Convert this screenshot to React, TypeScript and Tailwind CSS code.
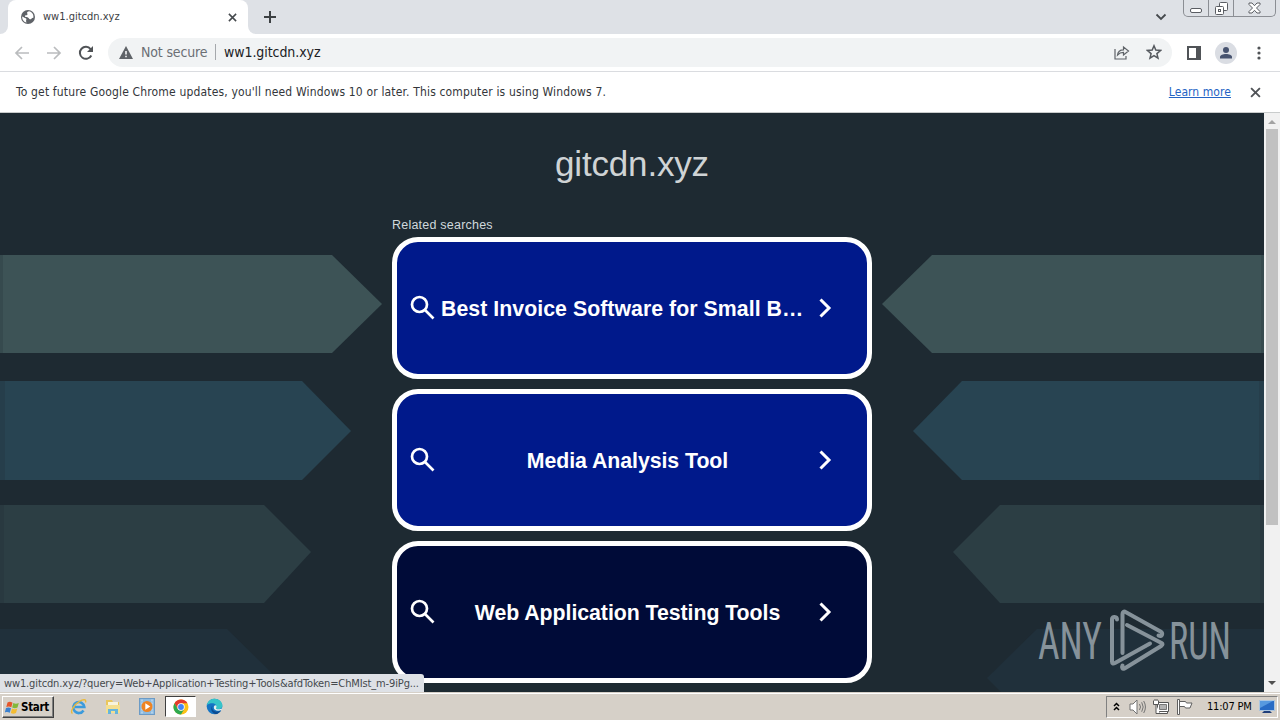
import type { ReactNode } from 'react';

// UI font of the desktop and the browser chrome
const uiFont = "font-['DejaVu_Sans_Condensed','DejaVu_Sans',sans-serif] [font-stretch:condensed]";

type Search = { label: string; active?: boolean; clipped?: boolean };

const searches: Search[] = [
    { label: 'Best Invoice Software for Small B…', clipped: true },
    { label: 'Media Analysis Tool' },
    { label: 'Web Application Testing Tools', active: true },
];

function Globe() {
    return (
        <svg width="16" height="16" viewBox="0 0 16 16">
            <circle cx="8" cy="8" r="7" fill="#5f6368" />
            <path d="M9 2.2c-2 .4-2.3 1.6-1.6 2.6.5.8-.4 1.6-1.6 1.5-1.2 0-1.1 1.4-.2 1.7 1.4.2 2.6.3 3.2 1.3.5 1 .9 1.2 1.9.9 1.1-.4 1.1-1.7 2.7-1.5C13.8 5.2 12 2.8 9 2.2Z" fill="#fff" />
            <path d="M2.2 7.5c1.5.6 2.3 1.5 3.6 1.8 1 .4.5 1.6.3 2.3-.2.8.2 1.4.5 2C4 13.2 2 10.600 2.200 7.500Z" fill="#fff" />
        </svg>
    );
}

function Cross({ size, stroke }: { size: number; stroke: string }) {
    return (
        <svg width={size} height={size} viewBox="0 0 10 10" stroke={stroke} strokeWidth="1.7">
            <path d="M1 1l8 8M9 1L1 9" />
        </svg>
    );
}

function TabStrip() {
    return (
        <div className="flex h-[34px] bg-[#dee1e6]">
            <div className="flex w-2 bg-white">
                <div className="w-2 rounded-br-lg bg-[#dee1e6]" />
            </div>
            <div className="flex w-[240px] items-center rounded-t-lg bg-white pr-[11px] pl-3">
                <Globe />
                <span className="ml-[7px] flex-1 text-[11px] text-[#3c4043]">ww1.gitcdn.xyz</span>
                <Cross size={9} stroke="#45494d" />
            </div>
            <div className="flex w-2 bg-white">
                <div className="w-2 rounded-bl-lg bg-[#dee1e6]" />
            </div>
            <svg className="mt-[11px] ml-2" width="12" height="12" stroke="#3c4043" strokeWidth="2">
                <path d="M6 0v12M0 6h12" />
            </svg>
            <svg className="mt-[13px] ml-auto" width="12" height="8" fill="none" stroke="#45494d" strokeWidth="1.8">
                <path d="M1.500 1.500L6 6l4.500-4.500" />
            </svg>
            {/* Window buttons */}
            <div className="mr-1 ml-4 flex h-[17px] w-[93px] rounded-b-[5px] border border-t-0 border-[#8b8e94] text-[#5a5d63]">
                <div className="flex w-[25px] items-end justify-center border-r border-[#8b8e94] pb-[3px]">
                    <div className="h-[5px] w-3 rounded-[2px] border border-current bg-white" />
                </div>
                <div className="flex w-[25px] items-center justify-center border-r border-[#8b8e94]">
                    <svg width="13" height="13" fill="#fff" stroke="currentColor">
                        <rect x="4.500" y=".5" width="8" height="8" rx="1" />
                        <rect x=".5" y="4.500" width="8" height="8" rx="1" />
                        <rect x="3.500" y="7.500" width="2" height="2" />
                    </svg>
                </div>
                <div className="flex flex-1 items-center justify-center">
                    <svg width="13" height="12" viewBox="0 0 13 12" fill="#fff" stroke="currentColor">
                        <path d="M1 1h3l2.500 2.700L9 1h3v1.500L8.500 6 12 9.500V11H9L6.500 8.300 4 11H1V9.500L4.500 6 1 2.500Z" />
                    </svg>
                </div>
            </div>
        </div>
    );
}

function Toolbar() {
    return (
        <div className="flex h-[38px] items-center border-b border-[#dadce0] bg-white pl-[14px]">
            <svg width="16" height="16" fill="none" stroke="#babcbe" strokeWidth="1.700">
                <path d="M15 8H2M8 2L2 8l6 6" />
            </svg>
            <svg className="ml-4" width="16" height="16" fill="none" stroke="#babcbe" strokeWidth="1.700">
                <path d="M1 8h13M8 2l6 6-6 6" />
            </svg>
            <svg className="ml-4" width="16" height="16" fill="none" stroke="#505357" strokeWidth="2">
                <path d="M13.300 10.500A6 6 0 1 1 12.600 4.100L14 5.500" />
                <path d="M15 1v6H9Z" fill="#505357" stroke="none" />
            </svg>
            <div className="mb-px ml-[14px] flex h-[29px] w-[1064px] items-center rounded-full bg-[#f1f3f4] pr-[10px] pl-[11px]">
                <svg width="14" height="13">
                    <path d="M7 0l7 13H0Z" fill="#5f6368" />
                    <path d="M7 5v3.500M7 9.800v1.500" stroke="#fff" strokeWidth="1.500" />
                </svg>
                <span className="mt-px ml-[8px] w-[67px] text-[14px] tracking-[-0.15px] whitespace-nowrap text-[#6b6f74]">Not secure</span>
                <div className="ml-[7px] h-4 w-px bg-[#a5a8ac]" />
                <span className="mt-px ml-2 flex-1 text-[14px] tracking-[-0.07px] text-[#202124]">ww1.gitcdn.xyz</span>
                <svg width="16" height="15" fill="none" stroke="#5f6368" strokeWidth="1.200">
                    <path d="M1 4v10h11v-3" />
                    <path d="M3.500 10c.4-3.700 2.500-5.200 6-5.200V2l5 4-5 4V7.300c-2.500 0-4.300.7-6 2.700Z" />
                </svg>
                <svg className="ml-4" width="16" height="16" fill="none" stroke="#55595e" strokeWidth="1.500">
                    <path d="M8 1.800l1.800 4.300 4.700.4-3.600 3.100 1.100 4.600L8 11.700l-4 2.500 1.100-4.600-3.600-3.100 4.700-.4Z" />
                </svg>
            </div>
            <svg className="ml-[15px]" width="14" height="14">
                <path d="M1 1h12v12H1Z" fill="none" stroke="#505357" strokeWidth="2" />
                <path d="M9 0h5v14H9Z" fill="#505357" />
            </svg>
            <svg className="ml-[14px]" width="22" height="22">
                <circle cx="11" cy="11" r="11" fill="#dadde3" />
                <circle cx="11" cy="8" r="3" fill="#47536f" />
                <path d="M5 16.500v-1.500c0-2 3-3 6-3s6 1 6 3v1.500Z" fill="#47536f" />
            </svg>
            <svg className="ml-5" width="4" height="14" fill="#505357">
                <circle cx="2" cy="2" r="1.600" />
                <circle cx="2" cy="7" r="1.600" />
                <circle cx="2" cy="12" r="1.600" />
            </svg>
        </div>
    );
}

function InfoBar() {
    return (
        <div className="flex h-[41px] items-center border-b border-[#c9cccc] bg-white pr-[19px] pl-4 text-[12px] text-[#33363a]">
            <span className="tracking-[0.16px]">To get future Google Chrome updates, you'll need Windows 10 or later. This computer is using Windows 7.</span>
            <a className="ml-auto tracking-[0.07px] text-[#2463c4] underline">Learn more</a>
            <span className="ml-[19px]"><Cross size={11} stroke="#505357" /></span>
        </div>
    );
}

// Arrow banners behind the search list, mirrored on the right half
function Arrows() {
    const bands = (
        <>
            <path d="M0 142h332l50 49-50 49H0Z" fill="#3d5356" />
            <path d="M0 268h302l49 50-49 49H0Z" fill="#284452" />
            <path d="M0 392h264l47 47-47 51H0Z" fill="#2c3e44" />
            <path d="M0 516h227l50 49-14 14H0Z" fill="#20303b" />
            <path d="M0 142h3v98H0ZM0 268h5v99H0ZM0 392h4v98H0Z" fill="#1e2931" opacity=".2" />
        </>
    );
    return (
        <svg className="absolute inset-0" width="1264" height="579">
            <g>{bands}</g>
            <g transform="translate(1264 0) scale(-1 1)">{bands}</g>
        </svg>
    );
}

function SearchCard({ label, active, clipped }: Search) {
    return (
        <a className={`flex h-[142px] items-center rounded-[26px] border-[5px] border-white pr-[35px] pl-[13px] text-white ${active ? 'bg-[#000b38]' : 'bg-[#00198b]'}`}>
            <svg className="-mt-px shrink-0" width="25" height="25" fill="none" stroke="#fff" strokeWidth="2.700">
                <circle cx="9.500" cy="9.500" r="7.500" />
                <path d="M15 15l8.500 8.500" />
            </svg>
            <span className={`mt-[2px] flex-1 text-[21.3px] leading-7 font-bold whitespace-nowrap ${clipped ? 'pl-[6px] text-left tracking-[0.04px]' : 'pl-[3px] text-center tracking-[-0.05px]'}`}>{label}</span>
            <svg className="ml-px shrink-0" width="14" height="22" fill="none" stroke="#fff" strokeWidth="3">
                <path d="M2.500 2.500L11 11l-8.500 8.500" />
            </svg>
        </a>
    );
}

function Watermark() {
    return (
        <svg className="absolute top-[494px] left-[1036px]" width="228" height="72" fill="#86929a" fontFamily="Roboto, sans-serif" fontSize="52">
            <text x="2" y="52" textLength="64" lengthAdjust="spacingAndGlyphs">ANY</text>
            <g fill="none" stroke="#86929a" strokeWidth="4" strokeLinejoin="round" strokeLinecap="round">
                <path d="M81 12.500c0-3-5-3.500-5-.5v42.500c0 2 1 2.500 3 1.500l35-19.500" />
                <path d="M86.500 46V7c0-2 1.500-3 3-2l35 19.500c3 2 1.500 6-2 4" />
                <path d="M91 18l34.500 18q2 1.300 0 2.700L88.500 61.500c-2 1-3-1-2-3" />
            </g>
            <text x="133" y="52" textLength="62" lengthAdjust="spacingAndGlyphs">RUN</text>
        </svg>
    );
}

function ScrollBar() {
    return (
        <div className="flex w-4 flex-col items-center bg-[#f1f1f1]">
            <svg className="mt-[6px]" width="8" height="5"><path d="M0 5l4-4 4 4Z" fill="#a3a3a3" /></svg>
            <div className="mt-[5px] h-[396px] w-3 bg-[#c1c1c1]" />
            <svg className="mt-auto mb-[6px]" width="8" height="5"><path d="M0 0l4 4 4-4Z" fill="#505050" /></svg>
        </div>
    );
}

function ParkedPage() {
    return (
        <div className="relative flex h-[579px] overflow-hidden bg-[#1e2a32]">
            <Arrows />
            <div className="relative flex flex-1 flex-col items-center font-['Liberation_Sans',Arial,sans-serif]">
                <h1 className="mt-[30px] h-[42px] text-[35px] leading-[42px] tracking-[-0.18px] text-[#cfd3d5]">gitcdn.xyz</h1>
                <div className="mt-[31px] flex w-[480px] flex-col gap-[10px]">
                    <p className="-mb-[2px] h-[13px] text-[12.5px] leading-[18px] tracking-[0.22px] text-[#d0d8dc]">Related searches</p>
                    {searches.map((s) => (
                        <SearchCard key={s.label} {...s} />
                    ))}
                </div>
            </div>
            <Watermark />
            <ScrollBar />
            {/* Link target bubble */}
            <div className="absolute bottom-0 left-0 h-[18px] w-[424px] rounded-tr-[3px] bg-[#dee1e6] pl-1 text-[11px] leading-[19px] tracking-[-0.13px] whitespace-nowrap text-[#45494d]">
                ww1.gitcdn.xyz/?query=Web+Application+Testing+Tools&amp;afdToken=ChMIst_m-9iPg...
            </div>
        </div>
    );
}

function TaskButton({ active, children }: { active?: boolean; children: ReactNode }) {
    return (
        <div className={`flex h-[21px] w-[31px] items-center justify-center ${active ? 'border border-t-[#404040] border-r-white border-b-white border-l-[#404040] bg-white' : ''}`}>
            {children}
        </div>
    );
}

function Taskbar() {
    return (
        <div className="flex h-7 items-start bg-[#d6d0c8] pt-px">
            <div className="flex h-full w-full items-start border-t border-white pt-[2px] pl-[2px]">
                <div className="flex h-[22px] w-[52px] items-center border border-t-white border-r-[#404040] border-b-[#404040] border-l-white pl-[2px] shadow-[inset_-1px_-1px_0_#808080]">
                    <svg width="15" height="15" viewBox="0 0 15 15">
                        <path d="M2.500 2.500c1.700-1 3.300-.8 5 .2L6.300 7.200c-1.700-.9-3.200-1-5-.2Z" fill="#e5562b" />
                        <path d="M8.300 3c1.700 1 3.500 1 5.500 0l-1.300 4.500c-1.700.9-3.600.9-5.300 0Z" fill="#84b83a" />
                        <path d="M1 8c1.700-.8 3.400-.7 5 .2l-1.200 4.500c-1.700-.9-3.300-1-5-.2Z" fill="#3a80cf" />
                        <path d="M7 8.500c1.700.9 3.500.9 5.300 0L11 13c-1.800.9-3.500.9-5.200 0Z" fill="#f4bc32" />
                    </svg>
                    <span className="ml-px text-[11.500px] leading-4 font-bold tracking-[-0.3px] text-black">Start</span>
                </div>
                <div className="ml-[9px] flex gap-[3px] text-black">
                    <TaskButton>
                        <svg width="18" height="18" viewBox="0 0 18 18" fill="none">
                            <path d="M13.500 12.500a5.500 5.500 0 1 1 .8-3.500H5" stroke="#3c9bdc" strokeWidth="2.600" />
                            <path d="M2.500 15.500C-.5 14 4 6.500 9.500 3.300 13 1.200 16.800 1 15.500 4.500" stroke="#e9b93c" strokeWidth="1.400" />
                        </svg>
                    </TaskButton>
                    <TaskButton>
                        <svg width="18" height="17" viewBox="0 0 18 17">
                            <path d="M2 2h6l1 2h6v10H2Z" fill="#e9c65c" />
                            <path d="M4 4h10v4H4Z" fill="#f8f4dc" />
                            <path d="M2 7h14v8H2Z" fill="#f4df90" />
                            <path d="M4 16v-5h10v5h-3v-3H7v3Z" fill="#66b5dc" />
                        </svg>
                    </TaskButton>
                    <TaskButton>
                        <svg width="16" height="17" viewBox="0 0 16 17">
                            <rect x=".5" y=".5" width="15" height="16" fill="#8ebbe0" stroke="#6c9bc6" />
                            <path d="M3 1.500v14M13 1.500v14" stroke="#d6e8f5" strokeDasharray="2 1" />
                            <circle cx="8" cy="8.500" r="5.500" fill="#ee8423" />
                            <path d="M6.300 5.300l5 3.200-5 3.200Z" fill="#fff" />
                        </svg>
                    </TaskButton>
                    <TaskButton active>
                        <svg width="16" height="16" viewBox="0 0 16 16">
                            <circle cx="8" cy="8" r="7.500" fill="#fbc116" />
                            <path d="M1.500 4.250A7.500 7.500 0 0 1 14.500 4.250H8L4.750 9.900Z" fill="#e33b2e" />
                            <path d="M1.500 4.250A7.500 7.500 0 0 0 8 15.500l3.250-5.600L8 11.700 4.750 9.900Z" fill="#2da94f" />
                            <circle cx="8" cy="8" r="3.700" fill="#fff" />
                            <circle cx="8" cy="8" r="2.900" fill="#4285f4" />
                        </svg>
                    </TaskButton>
                    <TaskButton>
                        <svg width="17" height="17" viewBox="0 0 17 17">
                            <circle cx="8.500" cy="8.500" r="7.800" fill="#1474c4" />
                            <path d="M.8 7C2 2.500 5 .7 8.700.7c4.300 0 7.700 3.300 7.700 6.800 0 2.500-2 3.800-4.200 3.800-1.900 0-2.700-.8-2.200-1.500C11.700 6 6 3.500.8 7Z" fill="#36c4c9" />
                            <path d="M6.500 7.500c-1.700 3.500 1.300 7 6.800 5.800l1.700-.8c-1 1.800-3 3.300-5 3.700-4-.4-6.200-5.500-3.500-8.700Z" fill="#0b4b91" />
                            <path d="M9.300 7.200c2 .5 1.200 2 .7 2.700-.3.900 1.300 1.600 3.500 1.300l2.800-.8-.5 1.400c-4 2-8.300.5-8-2.500 0-.9.600-1.800 1.500-2.100Z" fill="#e3f1ef" />
                        </svg>
                    </TaskButton>
                </div>
                {/* Tray */}
                <div className="mr-[2px] ml-auto flex h-[22px] w-[172px] items-center border border-t-[#808080] border-r-white border-b-white border-l-[#808080] pl-[6px]">
                    <svg className="-mt-[2px]" width="7" height="9" fill="none" stroke="#000" strokeWidth="1.500"><path d="M1 4l2.500-2.500L6 4M1 8l2.500-2.500L6 8" /></svg>
                    <svg className="ml-[9px]" width="18" height="16" fill="none" stroke="#737373">
                        <path d="M1 5h3l4-4v14l-4-4H1Z" fill="#fff" />
                        <path d="M10.500 5q2 3 0 6M12.700 3.300q3 4.700 0 9.400M14.700 2q3.500 6 0 12" />
                    </svg>
                    <svg className="ml-[6px]" width="16" height="16" fill="#fff" stroke="#555">
                        <path d="M4.500 3.500h11v9h-11Z" />
                        <path d="M6.500 5.500h7v5h-7Z" fill="#b2b2b2" stroke="#777" />
                        <path d="M6.500 14.500h8v-2h-8Z" />
                        <path d="M.5 1.500v4h5v-4M2 0v2M4 0v2M3 5.500v9h4" />
                    </svg>
                    <svg className="ml-[7px]" width="17" height="16" fill="#fff" stroke="#606060">
                        <path d="M3.500 2.500h6l1 1.500h5.500l-2 5H9.500l-1-1.500h-5Z" />
                        <path d="M1.500.5h2v15h-2Z" />
                    </svg>
                    <span className="ml-[14px] text-[11px] tracking-[-0.2px] whitespace-nowrap text-black">11:07 PM</span>
                    <svg className="mr-[2px] ml-auto" width="16" height="14">
                        <path d="M.5.5h15v10H.5Z" fill="#286bc5" stroke="#abc6e1" />
                        <path d="M1 1h13L1 8Z" fill="#5799df" />
                        <path d="M5 11h6l2 2H3Z" fill="#1f3e79" />
                    </svg>
                </div>
            </div>
        </div>
    );
}

export default function App() {
    return (
        <div className={`h-[720px] w-[1280px] overflow-hidden ${uiFont}`}>
            <TabStrip />
            <Toolbar />
            <InfoBar />
            <ParkedPage />
            <Taskbar />
        </div>
    );
}
